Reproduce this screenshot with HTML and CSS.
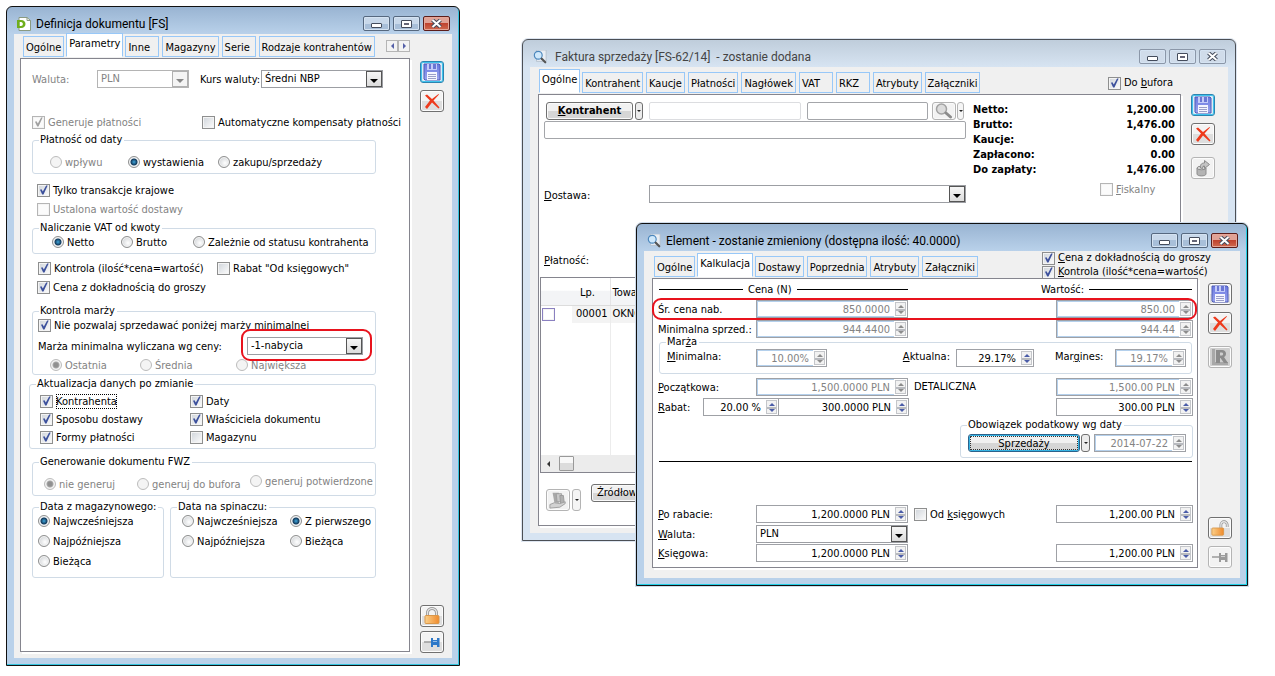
FILE: index.html
```
<!DOCTYPE html>
<html lang="pl">
<head>
<meta charset="utf-8">
<title>Definicja dokumentu [FS]</title>
<link rel="stylesheet" href="styles.css">
</head>
<body>
<svg class="defs" aria-hidden="true">
  <linearGradient id="floppyFill" x1="0" y1="0" x2="0" y2="1"><stop offset="0" stop-color="#6a78e0"/><stop offset="1" stop-color="#9aa4ee"/></linearGradient>
  <linearGradient id="lockFill" x1="0" y1="0" x2="1" y2="0"><stop offset="0" stop-color="#fbd089"/><stop offset="1" stop-color="#ef8a2c"/></linearGradient>
  <symbol id="floppy" viewBox="0 0 18 18">
    <path d="M1 1h15l1 1v15H2l-1-1z" fill="url(#floppyFill)" stroke="#4f5db8"/>
    <path d="M4 1h10v6H4z" fill="#c3cbf8"/><path d="M6 1h2v5H6zM10 1h3v5h-3z" fill="#6a76d4"/>
    <path d="M4 9h10v8H4z" fill="#f4f5ff"/><path d="M5 11.500h8M5 13.500h8M5 15.500h8" stroke="#9a9ec8"/>
  </symbol>
  <symbol id="cross" viewBox="0 0 18 18">
    <path d="M2 3.500l2-1 5 4.500 6.500-5 .5.500-5.500 6 6 7-1 1-6.500-6-5 6.500L2 15l5-6.500z" fill="#ee3a1c"/>
  </symbol>
  <symbol id="lock" viewBox="0 0 18 18">
    <path d="M4.500 9V6a4.500 4.500 0 0 1 9 0v3" fill="none" stroke="#8d8d8d" stroke-width="3"/>
    <path d="M4.500 9V6a4.500 4.500 0 0 1 9 0v3" fill="none" stroke="#e4e4e4" stroke-width="1.500"/>
    <rect x="2" y="8.500" width="14" height="8" rx="1" fill="url(#lockFill)" stroke="#d9974a"/>
  </symbol>
  <symbol id="unlock" viewBox="0 0 20 18">
    <path d="M11 9V5.500a3.500 3.500 0 0 1 7 0V8" fill="none" stroke="#8d8d8d" stroke-width="3"/>
    <path d="M11 9V5.500a3.500 3.500 0 0 1 7 0V8" fill="none" stroke="#e4e4e4" stroke-width="1.500"/>
    <rect x="1" y="9" width="13" height="8" rx="1" fill="url(#lockFill)" stroke="#d9974a"/>
  </symbol>
  <symbol id="pin" viewBox="0 0 18 18">
    <path d="M1 9h8" stroke="#9a9a9a" stroke-width="1.500"/>
    <path d="M8 5h2v2h4V5h2.500v9H14v-2h-4v2H8z" fill="currentColor"/><path d="M10 8.500h4" stroke="#fff" stroke-opacity=".5"/>
  </symbol>
  <symbol id="lens" viewBox="0 0 16 16">
    <path d="M4 0h11v13H4z" fill="#e9eef4" stroke="#b4bfca"/>
    <circle cx="6" cy="6" r="4.500" fill="#cfe8fb" stroke="#4a86bc" stroke-width="1.300"/>
    <path d="M10 10l4 4" stroke="#555" stroke-width="2.500" stroke-linecap="round"/>
  </symbol>
  <symbol id="grayLens" viewBox="0 0 18 16">
    <circle cx="6.500" cy="6" r="5" fill="#dcdcdc" stroke="#a2a2a2" stroke-width="1.500"/>
    <path d="M11 10l4.500 4" stroke="#8c8c8c" stroke-width="3" stroke-linecap="round"/>
  </symbol>
  <symbol id="can" viewBox="0 0 18 18">
    <path d="M3 9v6c0 2.500 9 2.500 9 0V9" fill="#b4b4b4" stroke="#8c8c8c"/>
    <ellipse cx="7.500" cy="9" rx="4.500" ry="1.800" fill="#d4d4d4" stroke="#8c8c8c"/>
    <path d="M6.500 9c-.5-4 1.500-5 4-5V1.500l5 4-5 4V7c-1.500 0-2 .5-2 2.500z" fill="#c4c4c4" stroke="#8c8c8c"/>
  </symbol>
  <symbol id="letterR" viewBox="0 0 18 18">
    <path d="M1 1h3v13h13v3H1z" fill="#a8a8a8"/>
    <path d="M5 2h6c5 0 5 6 2 7l4 6h-4L9.500 10H9v5H5zM9 4.500v3h2c1.500 0 1.500-3 0-3z" fill="#8b8b8b" fill-rule="evenodd"/>
  </symbol>
  <symbol id="hand" viewBox="0 0 20 18">
    <path d="M4 1h7v11H6z" fill="#a8a8a8"/><path d="M8 2h6v9H9z" fill="#c8c8c8" stroke="#9c9c9c"/><path d="M12 4h4l1 9h-4z" fill="#b0b0b0" stroke="#989898"/>
    <path d="M1 14l5-2 6 1 6-2v2l-6 4-11 1z" fill="#d2d2d2" stroke="#9c9c9c"/>
  </symbol>
</svg>

<main class="desktop">

<section class="window invoice" aria-label="Faktura sprzedaży">
  <header class="titlebar">
    <svg class="app-icon"><use href="#lens"/></svg>
    <h1>Faktura sprzedaży [FS-62/14] &nbsp;- zostanie dodana</h1>
    <button class="ctl" aria-label="Minimalizuj"><i class="min"></i></button><button class="ctl" aria-label="Maksymalizuj"><i class="max"></i></button><button class="ctl" aria-label="Zamknij"><svg viewBox="0 0 11 9"><path d="M1.500 1l8 7M9.500 1l-8 7" class="x-edge"/><path d="M1.500 1l8 7M9.500 1l-8 7" class="x-fill"/></svg></button>
  </header>
  <div class="client">
    <div class="main">
      <nav class="tabs">
        <button class="tab active">Ogólne</button><button class="tab">Kontrahent</button><button class="tab">Kaucje</button><button class="tab">Płatności</button><button class="tab">Nagłówek</button><button class="tab">VAT</button><button class="tab">RKZ</button><button class="tab">Atrybuty</button><button class="tab">Załączniki</button>
        <div class="tab-checks"><label class="opt"><input type="checkbox" checked><span>Do <u>b</u>ufora</span></label></div>
      </nav>
      <div class="panel">
        <div class="head">
          <div class="head-form">
            <div class="pick">
              <button class="btn strong"><u>K</u>ontrahent</button><button class="drop" aria-label="Lista kontrahentów"></button>
              <input class="box pale" type="text" aria-label="Kod kontrahenta"><input class="box" type="text" aria-label="NIP">
              <button class="btn off search" aria-label="Szukaj"><svg><use href="#grayLens"/></svg></button><button class="drop off" aria-label="Opcje szukania"></button>
            </div>
            <input class="box full" type="text" aria-label="Nazwa kontrahenta">
            <div class="delivery"><label for="dostawa"><u>D</u>ostawa:</label><span class="combo"><select id="dostawa"><option></option></select><i class="arrow"></i></span></div>
          </div>
          <div class="totals">
            <dl><dt>Netto:</dt><dd>1,200.00</dd><dt>Brutto:</dt><dd>1,476.00</dd><dt>Kaucje:</dt><dd>0.00</dd><dt>Zapłacono:</dt><dd>0.00</dd><dt>Do zapłaty:</dt><dd>1,476.00</dd></dl>
            <label class="opt fiscal"><input type="checkbox" disabled><span><u>F</u>iskalny</span></label>
          </div>
        </div>
        <p class="payment"><u>P</u>łatność:</p>
        <div class="list">
          <table>
            <thead><tr><th class="c-check"></th><th class="c-no">Lp.</th><th>Towar</th></tr></thead>
            <tbody><tr><td class="c-check"><input type="checkbox" class="lilac" aria-label="Zaznacz 00001"></td><td class="c-no"><span>00001</span></td><td><span>OKNO</span></td></tr>
            <tr class="filler"><td></td><td></td><td></td></tr></tbody>
          </table>
          <div class="hscroll"><i class="tri-left"></i><i class="thumb"></i></div>
        </div>
        <div class="footer-bar">
          <button class="tool off" aria-label="Przekaż"><svg><use href="#hand"/></svg></button><button class="drop off tall" aria-label="Opcje"></button>
          <button class="btn">Źródłowe</button>
        </div>
      </div>
    </div>
    <aside class="side">
      <button class="tool hot" aria-label="Zapisz"><svg><use href="#floppy"/></svg></button>
      <button class="tool" aria-label="Anuluj"><svg><use href="#cross"/></svg></button>
      <button class="tool off apart" aria-label="Kosz"><svg><use href="#can"/></svg></button>
    </aside>
  </div>
</section>

<section class="window definition" aria-label="Definicja dokumentu">
  <header class="titlebar">
    <svg class="app-icon" viewBox="0 0 14 14"><path d="M2 .500h8l3.500 3v10H2z" fill="#fff" stroke="#8a9a80"/><path d="M10 .500v3h3.500" fill="none" stroke="#8a9a80"/><path d="M0 3h4c6 0 6 8 0 8H0zM2.500 5v4H4c2.500 0 2.500-4 0-4z" fill="#6fae1c" fill-rule="evenodd"/></svg>
    <h1>Definicja dokumentu [FS]</h1>
    <button class="ctl" aria-label="Minimalizuj"><i class="min"></i></button><button class="ctl" aria-label="Maksymalizuj"><i class="max"></i></button><button class="ctl close" aria-label="Zamknij"><svg viewBox="0 0 11 9"><path d="M1.500 1l8 7M9.500 1l-8 7" class="x-edge"/><path d="M1.500 1l8 7M9.500 1l-8 7" class="x-fill"/></svg></button>
  </header>
  <div class="client">
    <div class="main">
      <nav class="tabs">
        <button class="tab">Ogólne</button><button class="tab active">Parametry</button><button class="tab">Inne</button><button class="tab">Magazyny</button><button class="tab">Serie</button><button class="tab">Rodzaje kontrahentów</button>
        <span class="tab-scroll"><button aria-label="Poprzednie"><i class="tri-left"></i></button><button aria-label="Następne"><i class="tri-right"></i></button></span>
      </nav>
      <div class="panel">
        <div class="currency">
          <label class="dim" for="waluta1">Waluta:</label><span class="combo off"><select id="waluta1" disabled><option>PLN</option></select><i class="arrow"></i></span>
          <label class="second" for="kurs">Kurs waluty:</label><span class="combo"><select id="kurs"><option>Średni NBP</option></select><i class="arrow"></i></span>
        </div>
        <div class="cols generate"><label class="opt"><input type="checkbox" checked disabled><span>Generuje płatności</span></label><label class="opt"><input type="checkbox"><span>Automatyczne kompensaty płatności</span></label></div>
        <fieldset class="from-date"><legend>Płatność od daty</legend>
          <div class="cols"><label class="opt"><input type="radio" name="pd" disabled><span>wpływu</span></label><label class="opt"><input type="radio" name="pd" checked><span>wystawienia</span></label><label class="opt"><input type="radio" name="pd"><span>zakupu/sprzedaży</span></label></div>
        </fieldset>
        <div class="plain first"><label class="opt"><input type="checkbox" checked><span>Tylko transakcje krajowe</span></label></div>
        <div class="plain"><label class="opt"><input type="checkbox" disabled><span>Ustalona wartość dostawy</span></label></div>
        <fieldset class="vat"><legend>Naliczanie VAT od kwoty</legend>
          <div class="cols"><label class="opt"><input type="radio" name="vat" checked><span>Netto</span></label><label class="opt"><input type="radio" name="vat"><span>Brutto</span></label><label class="opt"><input type="radio" name="vat"><span>Zależnie od statusu kontrahenta</span></label></div>
        </fieldset>
        <div class="plain cols control"><label class="opt"><input type="checkbox" checked><span>Kontrola (ilość*cena=wartość)</span></label><label class="opt"><input type="checkbox"><span>Rabat "Od księgowych"</span></label></div>
        <div class="plain"><label class="opt"><input type="checkbox" checked><span>Cena z dokładnością do groszy</span></label></div>
        <fieldset class="margin-box"><legend>Kontrola marży</legend>
          <div class="cols"><label class="opt"><input type="checkbox" checked><span>Nie pozwalaj sprzedawać poniżej marży minimalnej</span></label></div>
          <div class="price-row"><label for="cena">Marża minimalna wyliczana wg ceny:</label><span class="combo marked"><select id="cena"><option>-1-nabycia</option></select><i class="arrow"></i></span></div>
          <div class="cols last"><label class="opt"><input type="radio" name="m" checked disabled><span>Ostatnia</span></label><label class="opt"><input type="radio" name="m" disabled><span>Średnia</span></label><label class="opt"><input type="radio" name="m" disabled><span>Największa</span></label></div>
        </fieldset>
        <fieldset class="update"><legend>Aktualizacja danych po zmianie</legend>
          <div class="cols"><label class="opt"><input type="checkbox" checked><span class="focus">Kontrahenta</span></label><label class="opt"><input type="checkbox" checked><span>Daty</span></label><label class="opt"><input type="checkbox" checked><span>Sposobu dostawy</span></label><label class="opt"><input type="checkbox" checked><span>Właściciela dokumentu</span></label><label class="opt"><input type="checkbox" checked><span>Formy płatności</span></label><label class="opt"><input type="checkbox"><span>Magazynu</span></label></div>
        </fieldset>
        <fieldset class="fwz"><legend>Generowanie dokumentu FWZ</legend>
          <div class="cols"><label class="opt"><input type="radio" name="f" checked disabled><span>nie generuj</span></label><label class="opt"><input type="radio" name="f" disabled><span>generuj do bufora</span></label><label class="opt raised"><input type="radio" name="f" disabled><span>generuj potwierdzone</span></label></div>
        </fieldset>
        <div class="dates">
          <fieldset><legend>Data z magazynowego:</legend>
            <div class="cols"><label class="opt"><input type="radio" name="dm" checked><span>Najwcześniejsza</span></label><label class="opt"><input type="radio" name="dm"><span>Najpóźniejsza</span></label><label class="opt"><input type="radio" name="dm"><span>Bieżąca</span></label></div>
          </fieldset>
          <fieldset class="stapler"><legend>Data na spinaczu:</legend>
            <div class="cols two"><label class="opt"><input type="radio" name="ds"><span>Najwcześniejsza</span></label><label class="opt"><input type="radio" name="ds" checked><span>Z pierwszego</span></label><label class="opt"><input type="radio" name="ds"><span>Najpóźniejsza</span></label><label class="opt"><input type="radio" name="ds"><span>Bieżąca</span></label></div>
          </fieldset>
        </div>
      </div>
    </div>
    <aside class="side">
      <button class="tool hot" aria-label="Zapisz"><svg><use href="#floppy"/></svg></button>
      <button class="tool" aria-label="Anuluj"><svg><use href="#cross"/></svg></button>
      <button class="tool bottom" aria-label="Zablokuj"><svg><use href="#lock"/></svg></button>
      <button class="tool blue" aria-label="Przypnij"><svg><use href="#pin"/></svg></button>
    </aside>
  </div>
</section>

<section class="window element" aria-label="Element">
  <header class="titlebar">
    <svg class="app-icon"><use href="#lens"/></svg>
    <h1>Element - zostanie zmieniony (dostępna ilość: 40.0000)</h1>
    <button class="ctl" aria-label="Minimalizuj"><i class="min"></i></button><button class="ctl" aria-label="Maksymalizuj"><i class="max"></i></button><button class="ctl close" aria-label="Zamknij"><svg viewBox="0 0 11 9"><path d="M1.500 1l8 7M9.500 1l-8 7" class="x-edge"/><path d="M1.500 1l8 7M9.500 1l-8 7" class="x-fill"/></svg></button>
  </header>
  <div class="client">
    <div class="main">
      <nav class="tabs">
        <button class="tab">Ogólne</button><button class="tab active">Kalkulacja</button><button class="tab">Dostawy</button><button class="tab">Poprzednia</button><button class="tab">Atrybuty</button><button class="tab">Załączniki</button>
        <div class="tab-checks"><label class="opt"><input type="checkbox" checked><span><u>C</u>ena z dokładnością do groszy</span></label><label class="opt"><input type="checkbox" checked><span><u>K</u>ontrola (ilość*cena=wartość)</span></label></div>
      </nav>
      <div class="panel">
        <div class="headings"><div class="rule-head price"><span>Cena (N)</span></div><div class="rule-head value"><span>Wartość:</span></div></div>
        <div class="calc marked-row"><label for="sr">Śr. cena nab.</label><span class="spin off"><input id="sr" type="text" value="850.0000" disabled><i class="steps"></i></span><span></span><span class="spin off"><input type="text" aria-label="Śr. cena nab. wartość" value="850.00" disabled><i class="steps"></i></span></div>
        <div class="calc"><label for="mi">Minimalna sprzed.:</label><span class="spin off"><input id="mi" type="text" value="944.4400" disabled><i class="steps"></i></span><span></span><span class="spin off"><input type="text" aria-label="Minimalna sprzed. wartość" value="944.44" disabled><i class="steps"></i></span></div>
        <fieldset class="mark-up"><legend>Mar<u>ż</u>a</legend>
          <div class="mark-grid"><label for="m1"><u>M</u>inimalna:</label><span class="spin off"><input id="m1" type="text" value="10.00%" disabled><i class="steps"></i></span><label for="m2"><u>A</u>ktualna:</label><span class="spin"><input id="m2" type="text" value="29.17%"><i class="steps"></i></span><label for="m3">Mar<u>g</u>ines:</label><span class="spin off"><input id="m3" type="text" value="19.17%" disabled><i class="steps"></i></span></div>
        </fieldset>
        <div class="calc after-box"><label for="po"><u>P</u>oczątkowa:</label><span class="spin off"><input id="po" type="text" value="1,500.0000 PLN" disabled><i class="steps"></i></span><span class="note">DETALICZNA</span><span class="spin off"><input type="text" aria-label="Początkowa wartość" value="1,500.00 PLN" disabled><i class="steps"></i></span></div>
        <div class="calc discount"><label for="ra"><u>R</u>abat:</label><span class="spin"><input id="ra" type="text" value="20.00 %"><i class="steps"></i></span><span class="spin joined"><input type="text" aria-label="Rabat kwota" value="300.0000 PLN"><i class="steps"></i></span><span></span><span class="spin"><input type="text" aria-label="Rabat wartość" value="300.00 PLN"><i class="steps"></i></span></div>
        <fieldset class="tax"><legend>Obowiązek podatkowy wg daty</legend>
          <div class="tax-row"><button class="btn hot-btn">Sprzedaży</button><button class="drop" aria-label="Wybierz datę"></button><span class="spin off"><input type="text" aria-label="Data" value="2014-07-22" disabled><i class="steps"></i></span></div>
        </fieldset>
        <hr>
        <div class="calc result"><label for="pr"><u>P</u>o rabacie:</label><span class="spin"><input id="pr" type="text" value="1,200.0000 PLN"><i class="steps"></i></span><label class="opt note"><input type="checkbox"><span>Od <u>k</u>sięgowych</span></label><span class="spin"><input type="text" aria-label="Po rabacie wartość" value="1,200.00 PLN"><i class="steps"></i></span></div>
        <div class="calc"><label for="wa"><u>W</u>aluta:</label><span class="combo"><select id="wa"><option>PLN</option></select><i class="arrow"></i></span></div>
        <div class="calc tight"><label for="ks"><u>K</u>sięgowa:</label><span class="spin"><input id="ks" type="text" value="1,200.0000 PLN"><i class="steps"></i></span><span></span><span class="spin"><input type="text" aria-label="Księgowa wartość" value="1,200.00 PLN"><i class="steps"></i></span></div>
      </div>
    </div>
    <aside class="side">
      <button class="tool" aria-label="Zapisz"><svg><use href="#floppy"/></svg></button>
      <button class="tool" aria-label="Anuluj"><svg><use href="#cross"/></svg></button>
      <button class="tool off solid apart" aria-label="Rejestr"><svg><use href="#letterR"/></svg></button>
      <button class="tool bottom" aria-label="Odblokuj"><svg><use href="#unlock"/></svg></button>
      <button class="tool off" aria-label="Przypnij"><svg><use href="#pin"/></svg></button>
    </aside>
  </div>
</section>

</main>
</body>
</html>
```
FILE: styles.css
```
* { box-sizing: border-box; }
body { margin: 0; background: #fff; color: #000; font: 11px/14px "DejaVu Sans Condensed", "DejaVu Sans", sans-serif; }
button, input, select { font: inherit; color: inherit; margin: 0; padding: 0; }
h1, p, dl, dd { margin: 0; }
label, span, button, legend { white-space: nowrap; }
.defs { position: absolute; width: 0; height: 0; }
.desktop { position: relative; min-height: 100vh; overflow: hidden; }

/* window frame */
.window { position: absolute; display: flex; flex-direction: column; padding: 0 7px 7px; border: 1px solid #111; border-radius: 6px 6px 0 0; background: linear-gradient(#99b4d2, #b9d1ea 27px); box-shadow: inset -1px -1px #35c4de; }
.definition { left: 6px; top: 6px; width: 454px; min-height: 660px; }
.invoice { left: 522px; top: 39px; width: 714px; min-height: 502px; border-color: #4b4f55; background: linear-gradient(#bfcddb, #d7e4f2 27px); box-shadow: 0 0 0 1px #dde5f0; }
.element { left: 636px; top: 223px; width: 612px; min-height: 363px; box-shadow: inset -1px -1px #22cfe6, 0 0 0 1px #d0dcea; }
.titlebar { display: flex; align-items: center; gap: 3px; height: 27px; padding: 6px 2px 0 3px; }
.titlebar h1 { flex: 1; margin-left: 2px; font: 12px/16px Roboto, "Open Sans", sans-serif; white-space: nowrap; }
.invoice .titlebar h1 { margin-left: 5px; color: #444; }
.app-icon { width: 14px; height: 14px; }
.ctl { display: flex; align-items: center; justify-content: center; width: 27px; height: 15px; border: 1px solid #56687f; border-radius: 2px; background: linear-gradient(#c8d8ea 50%, #a8bfd9 50%); box-shadow: inset 0 0 0 1px #d5e3f2; }
.ctl.close { border-color: #5c1d1a; background: linear-gradient(#e0a296 45%, #c0432f 50%, #cf6a50); box-shadow: inset 0 0 0 1px #e6a698; }
.invoice .ctl { border-color: #8b97a8; background: #d0dcea; }
.ctl svg { width: 11px; height: 9px; }
.x-edge { stroke: #444c5c; stroke-width: 4; }
.x-fill { stroke: #fff; stroke-width: 2; }
.min { width: 11px; height: 5px; margin-top: 4px; border: 1px solid #444c5c; border-radius: 1px; background: #fff; }
.max { width: 11px; height: 8px; border: 1px solid #444c5c; border-radius: 1px; background: #666677; box-shadow: inset 0 0 0 2px #fff; }

/* client area */
.client { flex: 1; display: flex; background: #f0f0f0; }
.main { flex: 1; min-width: 0; display: flex; flex-direction: column; padding: 0 0 6px 6px; }
.invoice .main { padding: 0 0 7px 8px; }
.element .main { padding: 0 0 10px 8px; }
.panel { flex: 1; display: flex; flex-direction: column; border: 1px solid #85858e; background: #fff; box-shadow: 2px 2px #fff; }
.panel label { padding-top: 1px; }
.side { display: flex; flex-direction: column; gap: 7px; width: 42px; padding: 27px 0 5px 10px; }
.invoice .side { width: 47px; }
.element .side { padding: 32px 0 10px 10px; }
.definition .bottom + .tool { margin-top: -3px; }
.bottom { margin-top: auto; }
.apart { margin-top: 5px; }

/* tabs */
.tabs { display: flex; align-items: flex-end; gap: 3px; height: 24px; padding: 0 0 1px 3px; }
.invoice .tabs, .element .tabs { height: 27px; padding-left: 2px; }
.tab { height: 21px; min-width: 34px; padding: 2px 2px 0; border: 1px solid #98c8f8; background: #f0f0f0; text-align: left; }
.tab.active { height: 24px; margin: 0 -1px; padding: 0 2px 3px; background: #fff; border-bottom-color: #fff; }
.tab-scroll { display: flex; align-self: center; margin-left: auto; }
.tab-scroll button { display: flex; align-items: center; justify-content: center; width: 12px; height: 12px; border: 1px solid #b5b5b5; background: #f3f3f3; }
.tri-left { width: 0; border: 3px solid transparent; border-right: 3px solid #5560a8; border-left: 0; }
.tri-right { width: 0; border: 3px solid transparent; border-left: 3px solid #5560a8; border-right: 0; }
.tab-checks { margin: 0 8px 2px auto; }
.element .tab-checks { width: 156px; margin: 0 0 -2px auto; }
.element .tab-checks .opt { height: 14px; }

/* tool buttons */
.tool { display: flex; align-items: center; justify-content: center; width: 24px; height: 22px; border: 1px solid #707070; border-radius: 3px; background: linear-gradient(#f3f3f3 50%, #dedede 50%); box-shadow: inset 0 0 0 1px #fcfcfc; }
.tool svg { width: 18px; height: 18px; }
.tool.hot { border-color: #2c84b0; box-shadow: inset 0 0 0 1px #3fc4ee; background: #dcebf5; }
.tool.off { border-color: #b4b4b4; background: #f2f2f2; color: #9a9a9a; }
.tool.solid { background: #cfcfcf; }
.tool.blue { color: #2d78c8; }
.btn { display: flex; align-items: center; justify-content: center; height: 18px; padding: 0 5px; border: 1px solid #707070; border-radius: 3px; background: linear-gradient(#f1f1f1 50%, #d6d6d6 50%); box-shadow: inset 0 0 0 1px #fafafa; }
.btn.strong { width: 87px; font-weight: bold; }
.btn.off { border-color: #b4b4b4; background: #f3f3f3; }
.drop { display: flex; align-items: center; justify-content: center; width: 8px; height: 18px; border: 1px solid #707070; border-radius: 3px; background: #ececec; }
.drop::after { content: ""; border: 2px solid transparent; border-top-color: #222; border-bottom: 0; }
.drop.off { border-color: #b4b4b4; background: #f5f5f5; }
.drop.tall { height: 22px; }

/* options */
.opt { display: flex; align-items: center; gap: 3px; height: 16px; }
.panel .opt { padding-top: 0; }
.panel .opt > span { padding-top: 1px; }
.opt:has(:disabled), .dim { color: #838383; }
.opt .focus { outline: 1px dotted #000; outline-offset: -1px; }
input[type="checkbox"] { appearance: none; flex: none; width: 13px; height: 13px; border: 1px solid #8e8f8f; background: linear-gradient(135deg, #cfd4da, #fdfdfd); box-shadow: inset 0 0 0 1px #f4f4f4; }
input[type="checkbox"]:disabled { border-color: #b5b5b5; background: #fbfbfb; }
input[type="checkbox"]:checked::before { content: ""; display: block; width: 11px; height: 11px; background: #3c509c; clip-path: polygon(18% 48%, 32% 44%, 44% 64%, 74% 8%, 88% 10%, 50% 92%, 38% 90%); }
input[type="checkbox"]:checked:disabled::before { background: #a0a0a0; }
input.lilac { border-color: #8a80c0; background: #fff; }
input[type="radio"] { appearance: none; flex: none; width: 12px; height: 12px; border: 1px solid #8e8f8f; border-radius: 50%; background: radial-gradient(circle at 60% 60%, #fff, #d0d3d6 80%); box-shadow: inset 0 0 0 1px #f4f4f4; }
input[type="radio"]:checked { background: radial-gradient(circle, #3fa6dc 0, #123a5c 3px, #e6eaee 4px); }
input[type="radio"]:disabled { border-color: #bcbcbc; background: #f4f4f4; }
input[type="radio"]:checked:disabled { background: radial-gradient(circle, #909090 2px, #a8a8a8 3px, #f0f0f0 4px); }

/* fields */
.box { height: 18px; min-width: 0; border: 1px solid #a4a6aa; border-radius: 2px; background: #fff; }
.box.pale { border-color: #dcdde0; }
.combo { display: grid; align-items: center; height: 18px; border: 1px solid #9c9ea3; background: #fff; }
.combo select { grid-area: 1 / 1; appearance: none; width: 100%; height: 16px; padding-left: 3px; border: 0; background: transparent; line-height: 16px; }
.arrow { grid-area: 1 / 1; justify-self: end; display: flex; align-items: center; justify-content: center; width: 16px; height: 16px; border: 1px solid #555; background: linear-gradient(#f6f6f6, #dcdcdc); pointer-events: none; }
.arrow::after { content: ""; margin-top: 4px; border: 4px solid transparent; border-top-color: #000; border-bottom: 0; }
.combo.off { border-color: #b4b4b4; }
.combo.off select { color: #838383; opacity: 1; }
.combo.off .arrow { border-color: #b0b0b0; background: #f4f4f4; }
.combo.off .arrow::after { border-top-color: #888; }
.spin { display: flex; height: 18px; border: 1px solid #9fa1a6; background: #fff; }
.spin input { flex: 1; width: 0; min-width: 0; height: 16px; padding: 1px 4px 0 0; border: 0; background: transparent; text-align: right; }
.spin.off input { color: #838383; box-shadow: inset 1px 1px #b4d0ec, inset 0 -1px #b4d0ec; }
.steps { display: flex; flex-direction: column; align-items: center; justify-content: space-around; width: 11px; margin: 1px; border: 1px solid #c4c6ca; background: linear-gradient(#f2f2f2 6px, #b8babf 6px 8px, #f2f2f2 8px); }
.steps::before { content: ""; border: 3px solid transparent; border-bottom-color: #4a5ca8; border-top: 0; }
.steps::after { content: ""; border: 3px solid transparent; border-top-color: #4a5ca8; border-bottom: 0; }
.off .steps::before { border-bottom-color: #8c8c8c; }
.off .steps::after { border-top-color: #8c8c8c; }

fieldset { min-width: 0; margin: 0; padding: 0; border: 1px solid #d0dbe6; border-radius: 3px; }
legend { height: 12px; margin-left: 6px; padding: 0 2px 0 1px; line-height: 12px; }
.cols { display: grid; }

/* definition window */
.definition .panel { padding: 11px 33px 0 11px; }
.currency { display: flex; align-items: center; }
.currency > * { flex: none; }
.currency .dim { width: 65px; }
.currency .off { width: 92px; }
.currency .second { width: 72px; padding-left: 11px; }
.currency .combo:last-child { width: 122px; }
.generate { grid-template-columns: 170px 1fr; margin: 26px 0 4px; }
.from-date .cols { grid-template-columns: 78px 90px 1fr; padding: 8px 0 3px 17px; }
.plain { margin-top: 3px; padding-left: 5px; }
.plain.first { margin-top: 8px; }
.vat { margin-top: 5px; }
.vat .cols { grid-template-columns: 69px 72px 1fr; padding: 0 0 3px 19px; }
.control { grid-template-columns: 179px 1fr; margin-top: 6px; padding-left: 6px; }
.margin-box { margin-top: 10px; padding-left: 5px; }
.margin-box legend { margin-left: 1px; }
.price-row { display: flex; align-items: center; gap: 7px; height: 20px; margin-top: 3px; }
.price-row label { flex: 1; }
.price-row .combo { width: 116px; margin-right: 12px; }
.marked { position: relative; }
.marked::before { content: ""; position: absolute; inset: -9px -10px -7px -7px; border: 2px solid #e8131d; border-radius: 9px; pointer-events: none; }
.margin-box .last { grid-template-columns: 90px 96px 1fr; padding: 1px 0 1px 12px; }
.update { margin: 3px 0 0 -3px; }
.update .cols { grid-template-columns: 150px 1fr; row-gap: 2px; padding: 3px 0 3px 10px; }
.fwz { margin-top: 7px; }
.fwz .cols { grid-template-columns: 93px 113px 1fr; padding: 8px 0 3px 11px; }
.raised { margin-top: -3px; }
.dates { display: grid; grid-template-columns: 132px 1fr; gap: 6px; margin-top: 5px; }
.dates .cols { row-gap: 4px; padding: 0 0 8px 5px; }
.dates .two { grid-template-columns: 108px 1fr; padding-left: 11px; }

/* invoice window */
.head { display: grid; grid-template-columns: 1fr 202px; gap: 7px; padding: 7px 5px 0; }
.pick { display: grid; grid-template-columns: 87px 8px 152px 122px 24px 7px; column-gap: 2px; margin-left: 2px; }
.pick .pale { margin: 0 -4px 0 4px; }
.pick .box:not(.pale) { margin: 0 -7px 0 8px; }
.pick .search { margin-left: 9px; width: 24px; padding: 0; }
.pick .search svg { width: 18px; height: 16px; }
.pick .drop:last-child { margin-left: 8px; width: 7px; }
.full { display: block; width: 100%; margin-top: 1px; }
.delivery { display: grid; grid-template-columns: 105px 1fr; align-items: center; margin-top: 46px; }
.delivery label { padding-top: 4px; }
.totals dl { display: grid; grid-template-columns: 1fr auto; padding-bottom: 1px; font-weight: bold; line-height: 15px; }
.totals dd { text-align: right; }
.fiscal { margin: 3px 0 0 127px; }
.payment { margin: 50px 0 0 5px; line-height: 16px; }
.list { display: flex; flex-direction: column; margin: 8px 0 0 1px; border: 1px solid #85858e; height: 196px; }
.list table { flex: 1; width: 100%; border-collapse: collapse; table-layout: fixed; }
.list th { height: 27px; padding: 4px 2px 0; border-right: 1px solid #e4e4e6; border-bottom: 1px solid #dcdcdc; background: linear-gradient(#fff 45%, #f3f4f6 50%); font-weight: normal; text-align: left; }
.list td { height: 18px; padding: 0 2px; border-right: 1px solid #ececec; vertical-align: middle; }
.list .c-check { width: 31px; padding: 0 1px; border-right: 0; }
.list .c-no { width: 38px; padding-left: 4px; }
.list th.c-no { padding-left: 8px; }
.list td:not(.c-check) { background: #f3f3f3; }
.list .filler td { height: auto; background: #fff; }
.list .filler td:first-child { border-right: 0; }
.list input { display: block; }
.hscroll { display: flex; align-items: center; gap: 9px; height: 17px; padding-left: 6px; background: #ececec; }
.hscroll .tri-left { border-right-color: #333; }
.thumb { width: 15px; height: 15px; border: 1px solid #999; border-radius: 1px; background: linear-gradient(#f8f8f8 50%, #dcdcdc 50%); }
.footer-bar { display: flex; gap: 2px; height: 52px; padding: 11px 0 0 7px; }
.footer-bar .tool, .footer-bar .drop { margin-top: 5px; }
.footer-bar .drop { width: 9px; }
.footer-bar .btn { margin-left: 8px; }

/* element window */
.element .panel { padding: 2px 4px 5px 5px; }
.headings { display: flex; justify-content: space-between; padding: 0 1px; }
.rule-head { display: flex; align-items: center; gap: 5px; height: 17px; }
.rule-head::before, .rule-head::after { content: ""; height: 1px; background: #000; }
.rule-head::after { flex: 1; }
.price { width: 249px; }
.price::before { width: 84px; }
.value { width: 151px; }
.value::before { display: none; }
.calc { display: grid; grid-template-columns: 98px 152px 1fr 137px; align-items: center; margin-top: 2px; }
.calc.tight { margin-top: 1px; }
.marked-row { position: relative; }
.marked-row::before { content: ""; position: absolute; inset: -2px -4px -2px -6px; border: 2px solid #e8131d; border-radius: 9px; pointer-events: none; }
.mark-up { margin: -2px 1px 0; }
.mark-grid { display: grid; grid-template-columns: 89px 71px 1fr 78px 81px 71px; padding: 1px 5px 6px 7px; }
.mark-grid > label { padding-top: 0; line-height: 16px; }
.mark-grid > label:nth-of-type(2) { justify-self: end; padding-right: 6px; }
.mark-grid > label:nth-of-type(3) { padding-left: 21px; }
.after-box { margin-top: 4px; }
.calc .note { padding-left: 6px; }
.discount { grid-template-columns: 45px 76px 130px 1fr 137px; }
.joined { margin-left: -1px; }
.tax { align-self: flex-end; width: 233px; margin: 3px 0 0; }
.tax-row { display: grid; grid-template-columns: 112px 9px 1fr; gap: 1px; padding: 3px 6px 5px 7px; }
.tax-row .spin { margin-left: 3px; }
.hot-btn { padding-top: 1px; border-color: #2c628b; box-shadow: inset 0 0 0 1px #35b4e4; outline: 1px dotted #333; outline-offset: -3px; }
.tax-row .drop { width: 9px; }
hr { width: calc(100% - 2px); height: 1px; margin: 3px 1px 0; border: 0; background: #000; }
.result { margin-top: 43px; }
```
